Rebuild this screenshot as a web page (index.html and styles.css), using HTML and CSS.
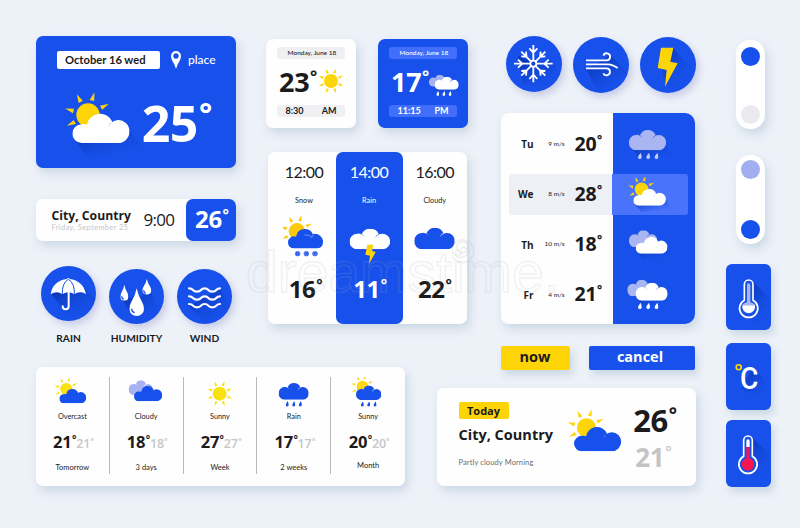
FILE: index.html
```html
<!DOCTYPE html>
<html lang="en">
<head>
<meta charset="utf-8">
<title>Weather widgets</title>
<link rel="stylesheet" href="styles.css">
</head>
<body>
<svg class="defs" width="0" height="0" aria-hidden="true">
  <defs>
    <linearGradient id="fade" x1="0" y1="0" x2="0.7" y2="1"><stop offset="0.2" stop-color="#0b36b4" stop-opacity=".9"/><stop offset="1" stop-color="#1750ea" stop-opacity="0"/></linearGradient>
    <symbol id="cloud" viewBox="0 0 172 94" preserveAspectRatio="none"><path d="M28 94A28 28 0 0 1 28 38Q36 36 44 39A40 40 0 0 1 120 30Q110 36 106 47Q116 27 137 25A34.500 34.500 0 0 1 137 94Z"/></symbol>
    <symbol id="puff" viewBox="0 0 121 62" preserveAspectRatio="none"><path d="M23 62A23.500 23.500 0 0 1 23 15Q30 14 38 19Q43 22 46 28Q43 21 36 16Q44 0 61 0Q80 0 87 15Q78 20 76 28Q84 15 98 15A23.500 23.500 0 0 1 98 62Z"/></symbol>
    <symbol id="sun5" viewBox="-80 -80 160 160"><circle r="35"/><path d="M-7 -45L1 -71L7 -45Z" transform="rotate(15)"/><path d="M-7 -45L1 -71L7 -45Z" transform="rotate(-29)"/><path d="M-7 -45L1 -71L7 -45Z" transform="rotate(61)"/><path d="M-7 -45L1 -71L7 -45Z" transform="rotate(-75)"/><path d="M-7 -45L1 -71L7 -45Z" transform="rotate(-118)"/></symbol>
    <symbol id="sun8" viewBox="-80 -80 160 160"><circle r="40"/><path d="M-8 -48L0 -76L8 -48Z" transform="rotate(22)"/><path d="M-8 -48L0 -76L8 -48Z" transform="rotate(67)"/><path d="M-8 -48L0 -76L8 -48Z" transform="rotate(112)"/><path d="M-8 -48L0 -76L8 -48Z" transform="rotate(157)"/><path d="M-8 -48L0 -76L8 -48Z" transform="rotate(202)"/><path d="M-8 -48L0 -76L8 -48Z" transform="rotate(247)"/><path d="M-8 -48L0 -76L8 -48Z" transform="rotate(292)"/><path d="M-8 -48L0 -76L8 -48Z" transform="rotate(337)"/></symbol>
    <symbol id="flake" viewBox="-7 -7 14 14"><circle r="6.500"/><path d="M0 -7V-4M0 4V7M-6 -3.500L-3.500 -2M6 3.500L3.500 2M-6 3.500L-3.500 2M6 -3.500L3.500 -2" stroke="#fefefe" stroke-width="1"/></symbol>
    <symbol id="drops" viewBox="0 0 62 20" preserveAspectRatio="none"><path d="M8 0Q12 12 11 14A5.500 5.500 0 0 1 0 14Q0 10 8 0ZM33 0Q37 12 36 14A5.500 5.500 0 0 1 25 14Q25 10 33 0ZM58 0Q62 12 61 14A5.500 5.500 0 0 1 50 14Q50 10 58 0Z"/></symbol>
    <symbol id="drop" viewBox="0 0 40 80" preserveAspectRatio="none"><path d="M20 0Q24 22 34 38Q40 48 40 60A20 20 0 0 1 0 60Q0 48 6 38Q16 22 20 0Z"/></symbol>
  </defs>
</svg>

<main class="board">
  <section class="col-a">
    <article class="card blue date-card">
      <header class="date-top">
        <span class="date-label">October 16 wed</span>
        <svg class="pin" viewBox="0 0 30 54"><path fill="#fff" fill-rule="evenodd" d="M15 0A15 15 0 0 0 0 15Q0 25 6 33Q12 42 15 54Q18 42 24 33Q30 25 30 15A15 15 0 0 0 15 0ZM15 7A8 8 0 1 1 15 23A8 8 0 1 1 15 7Z"/></svg>
        <span class="place">place</span>
      </header>
      <div class="date-main">
        <svg class="date-icon" viewBox="95 180 240 210"><path fill="url(#fade)" d="M134 328L172 388L335 352L290 290Z"/><use href="#sun5" x="93" y="175" width="160" height="160" fill="#fdd406"/><use href="#cloud" x="126" y="245" width="172" height="94" fill="#fff"/></svg>
        <span class="temp t50">25<i>°</i></span>
      </div>
    </article>

    <article class="card city-row">
      <div class="city-name"><strong>City, Country</strong><small>Friday, September 25</small></div>
      <span class="clock">9:00</span>
      <div class="city-temp"><span class="temp t24">26<i>°</i></span></div>
    </article>

    <div class="round-row">
      <figure class="f-rain">
        <div class="disc"><svg viewBox="33 228 165 165"><path fill="url(#fade)" d="M64 312L120 385L198 350V330L160 290Z"/><path fill="#fff" d="M62 313Q68 272 112 267V264H118V267Q160 272 168 313Q160 306 152 307Q142 306 133 313Q124 307 115 307Q106 307 97 313Q88 306 79 307Q70 307 62 313Z"/><path d="M115 268Q95 280 97 313M115 268Q135 280 133 313" fill="none" stroke="#1750ea" stroke-width="3"/><path d="M116 307V349A9 9 0 0 1 98 349" fill="none" stroke="#fff" stroke-width="6" stroke-linecap="round"/></svg></div>
        <figcaption>RAIN</figcaption>
      </figure>
      <figure class="f-hum">
        <div class="disc"><svg viewBox="236 236 165 165"><path fill="url(#fade)" d="M275 325L300 370L340 401L385 360L360 300L330 320Z"/><g fill="#fff"><use href="#drop" x="270" y="283" width="24" height="48"/><use href="#drop" x="336" y="266" width="27" height="47"/><use href="#drop" x="297" y="294" width="44" height="83"/></g><path d="M274 318q0 7 6 9M340 300q0 7 6 9M304 355q0 10 9 12" stroke="#1750ea" stroke-width="4" fill="none"/></svg></div>
        <figcaption>HUMIDITY</figcaption>
      </figure>
      <figure class="f-wind">
        <div class="disc"><svg viewBox="441 236 165 165"><path fill="url(#fade)" d="M476 350L530 401L600 350L570 295Z"/><path fill="none" stroke="#fff" stroke-width="6.500" stroke-linecap="round" d="M477 294q8 0 12 5t12 5t12-5t11-5t11 5t12 5t12-5t11-5M477 318q8 0 12 5t12 5t12-5t11-5t11 5t12 5t12-5t11-5M477 341q8 0 12 5t12 5t12-5t11-5t11 5t12 5t12-5t11-5"/></svg></div>
        <figcaption>WIND</figcaption>
      </figure>
    </div>
  </section>

  <section class="col-b">
    <div class="minis">
      <article class="card mini">
        <div class="strip">Monday, June 18</div>
        <div class="mini-main"><span class="temp t27">23<i>°</i></span><svg class="mini-sun" viewBox="-80 -80 160 160"><use href="#sun8" x="-80" y="-80" width="160" height="160" fill="#fdd406"/></svg></div>
        <div class="strip big"><span>8:30</span><span>AM</span></div>
      </article>
      <article class="card mini blue">
        <div class="strip">Monday, June 18</div>
        <div class="mini-main"><span class="temp t27">17<i>°</i></span><svg class="mini-rain" viewBox="516 130 96 72"><path fill="url(#fade)" d="M540 175L550 192L600 188L606 170Z"/><use href="#puff" x="519" y="135" width="64" height="36" fill="#a9b2f1"/><use href="#puff" x="536" y="141" width="72" height="39" fill="#fff"/><use href="#drops" x="541" y="184" width="46" height="15" fill="#fff"/></svg></div>
        <div class="strip big"><span>11:15</span><span>PM</span></div>
      </article>
    </div>

    <article class="card hourly">
      <div class="hour">
        <span class="h-time">12:00</span><span class="h-name">Snow</span>
        <svg class="h-icon" viewBox="70 205 135 155"><use href="#sun5" x="55" y="200" width="114" height="114" fill="#fdc90a"/><path d="M85 290a18 18 0 0 1 24-17q4-23 26-23q18 0 24 15q14-3 23 6q9 8 8 19q0 18-20 18H104q-19 0-19-18Z" fill="#1750ea"/><path d="M134 268q20-1 22 8q2-8 8-10" fill="none" stroke="#fff" stroke-width="1.500" opacity=".7"/><g fill="#3565ef"><use href="#flake" x="105" y="315" width="18" height="18"/><use href="#flake" x="131" y="315" width="18" height="18"/><use href="#flake" x="157" y="315" width="18" height="18"/></g></svg>
        <span class="temp t24">16<i>°</i></span>
      </div>
      <div class="hour active">
        <span class="h-time">14:00</span><span class="h-name">Rain</span>
        <svg class="h-icon" viewBox="262 205 135 155"><use href="#puff" x="270" y="249" width="121" height="62" fill="#fff"/><path fill="#fdd406" d="M323 297H341L337 316L348 319L328 355L331 330L317 327Z"/></svg>
        <span class="temp t24">11<i>°</i></span>
      </div>
      <div class="hour">
        <span class="h-time">16:00</span><span class="h-name">Cloudy</span>
        <svg class="h-icon" viewBox="454 205 135 155"><use href="#puff" x="461" y="246" width="121" height="65" fill="#1750ea"/></svg>
        <span class="temp t24">22<i>°</i></span>
      </div>
    </article>
  </section>

  <section class="col-c">
    <div class="discs">
      <div class="disc"><svg viewBox="30 18 168 168"><path fill="url(#fade)" d="M65 75L80 160L150 180L190 130L165 90L112 100Z"/><g stroke="#fff" stroke-width="5.500" fill="none"><circle cx="112" cy="101" r="9"/><path d="M112 92V45M100 55L112 68L124 55M112 110V157M100 147L112 134L124 147M121 101H170M158 89L145 101L158 113M103 101H54M66 89L79 101L66 113"/><path d="M112 92V50M102 60L112 72L122 60M112 110V152M102 142L112 130L122 142M121 101H163M153 91L141 101L153 111M103 101H61M71 91L83 101L71 111" transform="rotate(45 112 101)"/></g></svg></div>
      <div class="disc"><svg viewBox="234 21 168 168"><path fill="url(#fade)" d="M274 118L310 189L400 130L345 75L325 90Z"/><path fill="none" stroke="#fff" stroke-width="5.500" d="M273 91H335A10.500 10.500 0 1 0 325 77M273 103H340Q352 103 368 114M273 115H335A10.500 10.500 0 1 1 325 130"/></svg></div>
      <div class="disc"><svg viewBox="435 22 168 168"><path fill="url(#fade)" d="M534 55L580 105L545 165L510 165L500 115Z"/><path fill="#fdd406" d="M498 54H535L526 96L548 101L510 171L515 121L488 115Z"/></svg></div>
    </div>

    <article class="card days">
      <div class="day"><b>Tu</b><small>9 m/s</small><span class="temp t20">20<i>°</i></span>
        <svg viewBox="390 65 145 105"><path fill="url(#fade)" d="M415 134L440 165L535 155L505 110Z"/><use href="#puff" x="402" y="74" width="111" height="61" fill="#a9b6f2"/><use href="#drops" x="429" y="142" width="62" height="20" fill="#c4ccf8"/></svg></div>
      <div class="day on"><b>We</b><small>8 m/s</small><span class="temp t20">28<i>°</i></span>
        <svg viewBox="390 215 145 105"><path fill="url(#fade)" d="M420 298L440 320L530 312L508 275Z"/><use href="#sun5" x="393" y="205" width="94" height="94" fill="#fdd406"/><use href="#cloud" x="415" y="248" width="98" height="53" fill="#fff"/></svg></div>
      <div class="day"><b>Th</b><small>10 m/s</small><span class="temp t20">18<i>°</i></span>
        <svg viewBox="390 367 145 105"><path fill="url(#fade)" d="M428 443L445 465L530 455L512 425Z"/><use href="#puff" x="402" y="377" width="85" height="50" fill="#a9b6f2"/><use href="#cloud" x="422" y="393" width="96" height="54" fill="#fff"/></svg></div>
      <div class="day"><b>Fr</b><small>4 m/s</small><span class="temp t20">21<i>°</i></span>
        <svg viewBox="390 516 145 105"><path fill="url(#fade)" d="M428 583L445 605L530 598L512 565Z"/><use href="#puff" x="397" y="524" width="85" height="50" fill="#a9b6f2"/><use href="#puff" x="422" y="533" width="96" height="54" fill="#fff"/><use href="#drops" x="429" y="593" width="62" height="20" fill="#fff"/></svg></div>
    </article>

    <div class="buttons"><button class="now">now</button><button class="cancel">cancel</button></div>
  </section>

  <section class="col-d">
    <div class="toggle"><span class="knob"></span><span class="knob off"></span></div>
    <div class="toggle second"><span class="knob pale"></span><span class="knob"></span></div>
    <div class="tile"><svg viewBox="33 25 135 200"><path fill="url(#fade)" d="M112 75L165 130V190L140 215L78 175L100 130Z"/><path d="M88 134V86A13 13 0 0 1 114 86V134A27.500 27.500 0 1 1 88 134Z" fill="#1750ea" stroke="#fff" stroke-width="5"/><path d="M96 140V88A5 5 0 0 1 106 88V140Q118 143 120 149H82Q84 143 96 140Z" fill="#a9b6f2"/><path d="M82 149H120A19.500 19.500 0 1 1 82 149Z" fill="#fff"/></svg></div>
    <div class="tile"><svg viewBox="33 263 135 200"><path fill="url(#fade)" d="M115 335L155 385L150 440L80 400Z"/><circle cx="71" cy="336" r="7.500" fill="none" stroke="#fdd406" stroke-width="5"/></svg><span class="celsius">C</span></div>
    <div class="tile"><svg viewBox="33 494 135 200"><path fill="url(#fade)" d="M110 545L165 600V660L140 685L75 645L98 600Z"/><path d="M86 603V555A13 13 0 0 1 112 555V603A27.500 27.500 0 1 1 86 603Z" fill="#1750ea" stroke="#fff" stroke-width="5"/><path d="M94 575V557A5 5 0 0 1 104 557V575Z" fill="#fff"/><path d="M94 609V575H104V609A19 19 0 1 1 94 609Z" fill="#fb1550"/></svg></div>
  </section>

  <article class="card week">
    <div class="wk"><svg viewBox="70 50 120 90"><use href="#sun5" x="71" y="44" width="84" height="84" fill="#f9e111"/><use href="#cloud" x="92" y="83" width="81" height="46" fill="#1750ea"/></svg><span class="w-name">Overcast</span><div class="w-temp"><span class="temp t16">21<i>°</i></span><span class="temp ghost">21<i>°</i></span></div><span class="w-when">Tomorrow</span></div>
    <div class="wk"><svg viewBox="291 50 120 90"><use href="#puff" x="299" y="60" width="72" height="44" fill="#a9b2f1"/><use href="#cloud" x="315" y="74" width="85" height="49" fill="#1750ea"/></svg><span class="w-name">Cloudy</span><div class="w-temp"><span class="temp t16">18<i>°</i></span><span class="temp ghost">18<i>°</i></span></div><span class="w-when">3 days</span></div>
    <div class="wk"><svg viewBox="-41 50 120 90"><use href="#sun8" x="-24" y="58" width="84" height="84" fill="#f9e111"/></svg><span class="w-name">Sunny</span><div class="w-temp"><span class="temp t16">27<i>°</i></span><span class="temp ghost">27<i>°</i></span></div><span class="w-when">Week</span></div>
    <div class="wk"><svg viewBox="178 50 120 90"><use href="#puff" x="192" y="68" width="90" height="50" fill="#1750ea"/><use href="#drops" x="213" y="122" width="49" height="17" fill="#1750ea"/></svg><span class="w-name">Rain</span><div class="w-temp"><span class="temp t16">17<i>°</i></span><span class="temp ghost">17<i>°</i></span></div><span class="w-when">2 weeks</span></div>
    <div class="wk last"><svg viewBox="400 52 120 93"><use href="#sun5" x="401" y="40" width="84" height="84" fill="#fdd914"/><use href="#puff" x="423" y="78" width="78" height="45" fill="#1750ea"/><use href="#drops" x="438" y="128" width="49" height="16" fill="#1750ea"/></svg><span class="w-name">Sunny</span><div class="w-temp"><span class="temp t16">20<i>°</i></span><span class="temp ghost">20<i>°</i></span></div><span class="w-when">Month</span></div>
  </article>

  <article class="card today">
    <div class="t-left"><span class="badge">Today</span><strong>City, Country</strong><small>Partly cloudy Morning</small></div>
    <svg class="t-icon" viewBox="410 200 170 140"><use href="#sun5" x="403" y="197" width="131" height="131" fill="#fdd406"/><use href="#cloud" x="431" y="255" width="142" height="78" fill="#1750ea"/></svg>
    <div class="t-temps"><span class="temp t31">26<i>°</i></span><span class="temp t26">21<i>°</i></span></div>
  </article>
</main>
<div class="mark">dreamstime.<svg viewBox="0 0 32 32"><path d="M16 16a3 3 0 1 1 3 4a6 6 0 1 1 4-9a9 9 0 1 1-14-1a12 12 0 1 1-2 14"/></svg></div>
</body>
</html>
```

FILE: styles.css
```css
* { box-sizing: border-box; }
body {
  margin: 0;
  width: 800px;
  height: 528px;
  overflow: hidden;
  position: relative;
  background: #edf1f8;
  color: #1b1b1d;
  font-family: Lato, "Liberation Sans", sans-serif;
}
.defs { position: absolute; }
svg { display: block; flex: none; }
span, small, strong, b { white-space: nowrap; line-height: 1; }

.board {
  display: grid;
  grid-template-columns: 200px 30px 139px 31px 32px 32px 196px 30px 45px;
  grid-template-rows: 331px 21px 98px;
  padding: 36px 0 0 36px;
}
.col-a { grid-area: 1 / 1; }
.col-b { grid-area: 1 / 3 / 2 / 6; }
.col-c { grid-area: 1 / 7 / 3 / 8; }
.col-d { grid-area: 1 / 9 / 4 / 10; }
.week { grid-area: 2 / 1 / 4 / 4; }
.today { grid-area: 3 / 5 / 4 / 8; }

.card { background: #fefefe; border-radius: 7px; box-shadow: 3px 5px 8px rgba(165, 188, 208, .45); }
.blue { background: #1750ea; color: #fff; }

.temp { display: flex; font-family: "Open Sans", "Noto Sans", sans-serif; font-weight: 700; line-height: 1; letter-spacing: -.01em; }
.temp i { font-style: normal; font-size: .62em; line-height: 1; margin-left: .04em; font-weight: 700; }
.t50 { font-size: 50px; }
.t31 { font-size: 31px; }
.t27 { font-size: 27px; }
.t26 { font-size: 26px; color: #c4c4c4; font-weight: 700; }
.t26 i { font-weight: 400; }
.t24 { font-size: 24px; }
.t20 { font-size: 19.500px; }
.t16 { font-size: 16.500px; }

/* date card */
.date-card { width: 199.500px; height: 132px; padding: 15px 0 0 21px; }
.date-top { display: flex; align-items: center; height: 18px; }
.date-label { width: 102.500px; height: 18px; line-height: 18px; border-radius: 2px; background: #fff; color: #1b1b1d; padding-left: 8px; font-size: 11.200px; font-weight: 700; }
.pin { width: 10px; height: 18px; margin-left: 11.500px; }
.place { margin-left: 7px; font-size: 12px; font-weight: 500; }
.date-main { display: flex; padding: 21px 0 0 4.700px; }
.date-icon { width: 80px; height: 70px; }
.date-main .temp { margin-top: 8px; }

/* compact city row */
.city-row { display: flex; width: 199.500px; height: 42px; margin-top: 31px; padding-left: 15.500px; }
.city-name { width: 92px; padding-top: 10px; display: flex; flex-direction: column; }
.city-name strong { font: 700 12.200px/14px "Open Sans", sans-serif; }
.city-name small { font-size: 7.500px; line-height: 8px; letter-spacing: .35px; margin-top: 1px; color: #c6c6ca; }
.clock { width: 42.500px; font: 400 17px/42px "Open Sans", sans-serif; letter-spacing: -.7px; }
.city-temp { width: 49.500px; height: 42px; background: #1750ea; color: #fff; border-radius: 7px; padding: 8px 0 0 9px; }

/* round icons */
figure { margin: 0; display: flex; flex-direction: column; align-items: center; }
.disc { border-radius: 50%; background: #1750ea; overflow: hidden; box-shadow: 3px 4px 7px rgba(175, 180, 220, .6); }
.round-row { display: flex; padding: 25px 0 0 5px; gap: 13px; }
.round-row .disc, .round-row svg { width: 55px; height: 55px; }
.round-row figure { width: 55px; }
.f-hum .disc, .f-wind .disc { margin-top: 2.700px; }
figcaption { font-size: 10.200px; font-weight: 700; line-height: 12px; height: 12px; margin-top: 8px; }
.f-rain figcaption { margin-top: 10.700px; }
.discs { display: flex; height: 57px; gap: 11px; padding-left: 5.500px; }
.discs .disc, .discs svg { width: 56px; height: 56px; flex: none; }
.discs .disc + .disc { margin-top: 1px; }

/* small cards */
.minis { display: flex; gap: 22.500px; padding-top: 3px; }
.mini { width: 89.500px; height: 89px; padding: 8px 10.500px 0 11px; }
.strip { height: 12px; border-radius: 3px; background: #f0f0f3; font-size: 6.500px; line-height: 12px; padding-left: 10.500px; white-space: nowrap; font-weight: 500; }
.blue .strip { background: #416ffb; }
.mini-main { display: flex; height: 46px; padding: 8.500px 0 0 2px; }
.mini-sun { width: 28px; height: 28px; margin: -1px 0 0 0; }
.mini-rain { width: 32px; height: 24px; margin: 5px 0 0 -1px; }
.strip.big { display: flex; justify-content: space-between; padding: 0 8.500px; font-size: 9px; font-weight: 700; }
.strip.big span { line-height: 12px; }

/* hourly */
.hourly { display: flex; width: 199.500px; height: 171.500px; margin: 24px 0 0 1.500px; }
.hour { width: 68px; padding-top: 9.500px; display: flex; flex-direction: column; align-items: center; }
.hour.active { width: 67px; background: #1750ea; color: #fff; border-radius: 7px; }
.hour:last-child { width: 64.500px; }
.h-time { font-size: 16px; line-height: 20px; letter-spacing: -.5px; margin-left: 5px; }
.active .h-time, .hour:last-child .h-time { margin-left: 0; }
.h-name { font-size: 7.300px; line-height: 10px; margin: 14px 0 0 5px; }
.active .h-name, .hour:last-child .h-name { margin-left: 0; }
.h-icon { width: 45px; height: 51.700px; margin: 8px 0 11.500px 8px; }
.active .h-icon { margin-left: 1px; }
.hour:last-child .h-icon { margin-left: -1px; }
.hour .temp { margin-left: 8px; }
.active .temp { margin-left: 2px; }
.hour:last-child .temp { margin-left: 0; }

/* wind table */
.days { width: 194px; height: 211.500px; margin: 19.500px 0 0 .500px; padding: 11px 6.500px 0 8px; border-radius: 8px 10px 10px 8px; background: linear-gradient(90deg, #fefefe 111.500px, #1750ea 111.500px); }
.day { display: grid; grid-template-columns: 25px 31px 42px 1fr; align-items: center; height: 41.500px; margin-bottom: 8.700px; border-radius: 3px; }
.day.on { background: linear-gradient(90deg, #edf0f5 103.500px, #4a73fc 103.500px); }
.day b { font: 700 10px/12px "Open Sans", sans-serif; text-align: right; }
.day small { font-size: 6.500px; text-align: right; }
.day .temp { margin: -2px 0 0 10px; }
.day svg { width: 48.300px; height: 35px; margin-left: 18.500px; }

.buttons { display: flex; gap: 19px; padding: 21.500px 0 0 .500px; }
button { height: 24px; border: 0; border-radius: 2px; padding: 0 0 2px; font: 700 14.500px/22px "Open Sans", sans-serif; box-shadow: 3px 5px 7px rgba(165, 188, 208, .45); }
.now { width: 69px; background: #fdd406; color: #1b1b1d; }
.cancel { width: 106px; background: #1750ea; color: #fff; padding-right: 3px; }

/* toggles and tiles */
.toggle { width: 28.500px; height: 89px; margin: 4px 0 0 10px; padding: 6.500px 0 5px; border-radius: 14px; background: #fff; display: flex; flex-direction: column; align-items: center; justify-content: space-between; box-shadow: 3px 5px 8px rgba(165, 188, 208, .45); }
.toggle.second { height: 88.500px; margin-top: 26px; margin-bottom: 20px; padding: 5px 0; }
.knob { width: 19px; height: 19px; border-radius: 50%; background: #1750ea; }
.knob.off { background: #ebebef; }
.knob.pale { background: #a3aef0; }
.tile { position: relative; width: 45px; height: 66.500px; margin-bottom: 13px; border-radius: 6px; background: #1750ea; overflow: hidden; box-shadow: 3px 5px 7px rgba(165, 188, 208, .45); }
.tile + .tile { margin-bottom: 10.500px; }
.tile svg { width: 45px; height: 66.500px; }
.celsius { position: absolute; left: 13.500px; top: 19px; color: #fff; font: 500 32px/32px Roboto, sans-serif; transform: scaleX(.88); transform-origin: 0 0; }

/* five-column outlook */
.week { display: flex; padding-top: 10px; height: 118.500px; }
.wk { width: 73.800px; height: 97px; border-right: 1px solid #b9b9bd; display: flex; flex-direction: column; align-items: center; }
.wk.last { border: 0; }
.wk svg { width: 40px; height: 30px; }
.w-name { font-size: 7.300px; line-height: 10px; margin-top: 4.500px; }
.w-temp { display: flex; align-items: flex-end; margin: 11.500px 0 0 2px; height: 17px; }
.ghost { font-size: 12.500px; color: #c6c6c8; font-weight: 600; }
.w-when { font-size: 7.500px; line-height: 10px; margin-top: 12.500px; }
.last .w-when { margin-top: 11px; }

/* today card */
.today { display: flex; width: 259.500px; margin-left: .5px; height: 97.500px; }
.t-left { width: 128px; padding: 13.500px 0 0 22px; display: flex; flex-direction: column; align-items: flex-start; }
.badge { width: 50px; height: 17.500px; border-radius: 2px; background: #fdd406; text-align: center; font: 700 11px/17px "Open Sans", sans-serif; }
.t-left strong { font: 700 14.500px/20px "Open Sans", sans-serif; margin-top: 5.500px; }
.t-left small { font-size: 7.500px; line-height: 10px; letter-spacing: .12px; color: #6c6c72; margin-top: 13.500px; }
.t-icon { width: 56.700px; height: 46.700px; margin: 18.500px 0 0 2px; }
.t-temps { padding: 16.500px 0 0 10px; }
.t-temps .t26 { margin: 8px 0 0 2px; }

.mark { position: absolute; left: 246px; top: 244px; font: 400 57px/57px "Liberation Sans", sans-serif; color: transparent; -webkit-text-stroke: 1.500px rgba(175, 175, 188, .16); pointer-events: none; white-space: nowrap; }
.mark svg { position: absolute; left: 200px; top: -10px; width: 30px; height: 30px; fill: none; stroke: rgba(165, 165, 178, .2); stroke-width: 1.500; }
```
